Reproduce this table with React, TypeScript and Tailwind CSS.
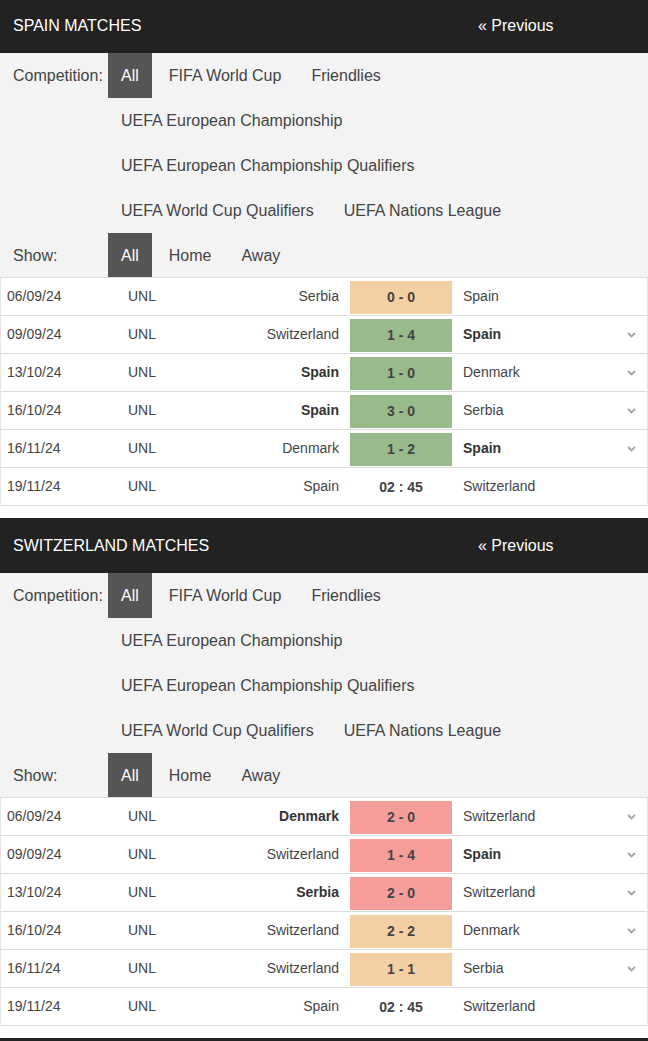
import React from "react";

type Match = {
  date: string;
  home: string;
  away: string;
  score: string;
  result?: "win" | "draw" | "loss";
  bold?: "home" | "away";
  more?: boolean;
};

const competitions = [
  "All",
  "FIFA World Cup",
  "Friendlies",
  "UEFA European Championship",
  "UEFA European Championship Qualifiers",
  "UEFA World Cup Qualifiers",
  "UEFA Nations League",
];

const spain: Match[] = [
  { date: "06/09/24", home: "Serbia", away: "Spain", score: "0 - 0", result: "draw" },
  { date: "09/09/24", home: "Switzerland", away: "Spain", score: "1 - 4", result: "win", bold: "away", more: true },
  { date: "13/10/24", home: "Spain", away: "Denmark", score: "1 - 0", result: "win", bold: "home", more: true },
  { date: "16/10/24", home: "Spain", away: "Serbia", score: "3 - 0", result: "win", bold: "home", more: true },
  { date: "16/11/24", home: "Denmark", away: "Spain", score: "1 - 2", result: "win", bold: "away", more: true },
  { date: "19/11/24", home: "Spain", away: "Switzerland", score: "02 : 45" },
];

const swiss: Match[] = [
  { date: "06/09/24", home: "Denmark", away: "Switzerland", score: "2 - 0", result: "loss", bold: "home", more: true },
  { date: "09/09/24", home: "Switzerland", away: "Spain", score: "1 - 4", result: "loss", bold: "away", more: true },
  { date: "13/10/24", home: "Serbia", away: "Switzerland", score: "2 - 0", result: "loss", bold: "home", more: true },
  { date: "16/10/24", home: "Switzerland", away: "Denmark", score: "2 - 2", result: "draw", more: true },
  { date: "16/11/24", home: "Switzerland", away: "Serbia", score: "1 - 1", result: "draw", more: true },
  { date: "19/11/24", home: "Spain", away: "Switzerland", score: "02 : 45" },
];

const resultBg = {
  win: "bg-[#99bb8b]",
  draw: "bg-[#f5cfa4]",
  loss: "bg-[#f49d99]",
};

const Chevron = () => (
  <svg width="9" height="6" viewBox="0 0 9 6" className="block">
    <path d="M1 1 L4.5 4.5 L8 1" fill="none" stroke="#a3a3a3" strokeWidth="1.8" />
  </svg>
);

const FilterRow = ({ label, items, short }: { label: string; items: string[]; short?: boolean }) => {
  const cell = short ? "h-[44px] pt-[1px] leading-[43px]" : "h-[45px] pt-[1px] leading-[44px]";
  return (
    <div className="flex">
      <div className={`w-[108px] shrink-0 pl-[13px] ${cell}`}>{label}</div>
      <div className="flex flex-wrap gap-x-[4px] w-[480px]">
        {items.map((item, i) => (
          <span key={item} className={`px-[13px] ${cell} ${i === 0 ? "bg-[#555555] text-white" : ""}`}>
            {item}
          </span>
        ))}
      </div>
    </div>
  );
};

const MatchRow = ({ m }: { m: Match }) => (
  <div className="flex items-center h-[38px] border-b border-[#dddddd] text-[14px] text-[#444444]">
    <div className="w-[121px] pl-[6px]">{m.date}</div>
    <div className="w-[120px] pl-[6px]">UNL</div>
    <div className={`w-[97px] text-right ${m.bold === "home" ? "font-bold text-[#333333]" : ""}`}>{m.home}</div>
    <div
      className={`ml-[11px] w-[102px] h-[33px] mt-[1px] flex items-center justify-center font-bold ${
        m.result ? resultBg[m.result] : ""
      }`}
    >
      {m.score}
    </div>
    <div className={`flex-1 pl-[11px] ${m.bold === "away" ? "font-bold text-[#333333]" : ""}`}>{m.away}</div>
    <div className="w-[9px] mr-[11px]">{m.more && <Chevron />}</div>
  </div>
);

const Section = ({ title, matches }: { title: string; matches: Match[] }) => (
  <section className="mb-[12px]">
    <div className="h-[55px] pt-[1px] bg-[#222222] text-white text-[16px] flex items-center">
      <span className="pl-[13px] flex-1">{title}</span>
      <span className="w-[170px]">« Previous</span>
    </div>
    <div className="bg-[#f3f3f3] text-[16px] text-[#444444] border-b border-[#dddddd]">
      <FilterRow label="Competition:" items={competitions} />
      <FilterRow label="Show:" items={["All", "Home", "Away"]} short />
    </div>
    <div className="bg-white border-x border-[#e6e6e6]">
      {matches.map((m) => (
        <MatchRow key={m.date + m.home} m={m} />
      ))}
    </div>
  </section>
);

export default function App() {
  return (
    <div className="w-[648px] h-[1041px] overflow-hidden bg-white font-['Liberation_Sans',Arial,sans-serif]">
      <div className="-mt-[2px]">
        <Section title="SPAIN MATCHES" matches={spain} />
        <Section title="SWITZERLAND MATCHES" matches={swiss} />
        <div className="h-[55px] bg-[#222222]" />
      </div>
    </div>
  );
}
